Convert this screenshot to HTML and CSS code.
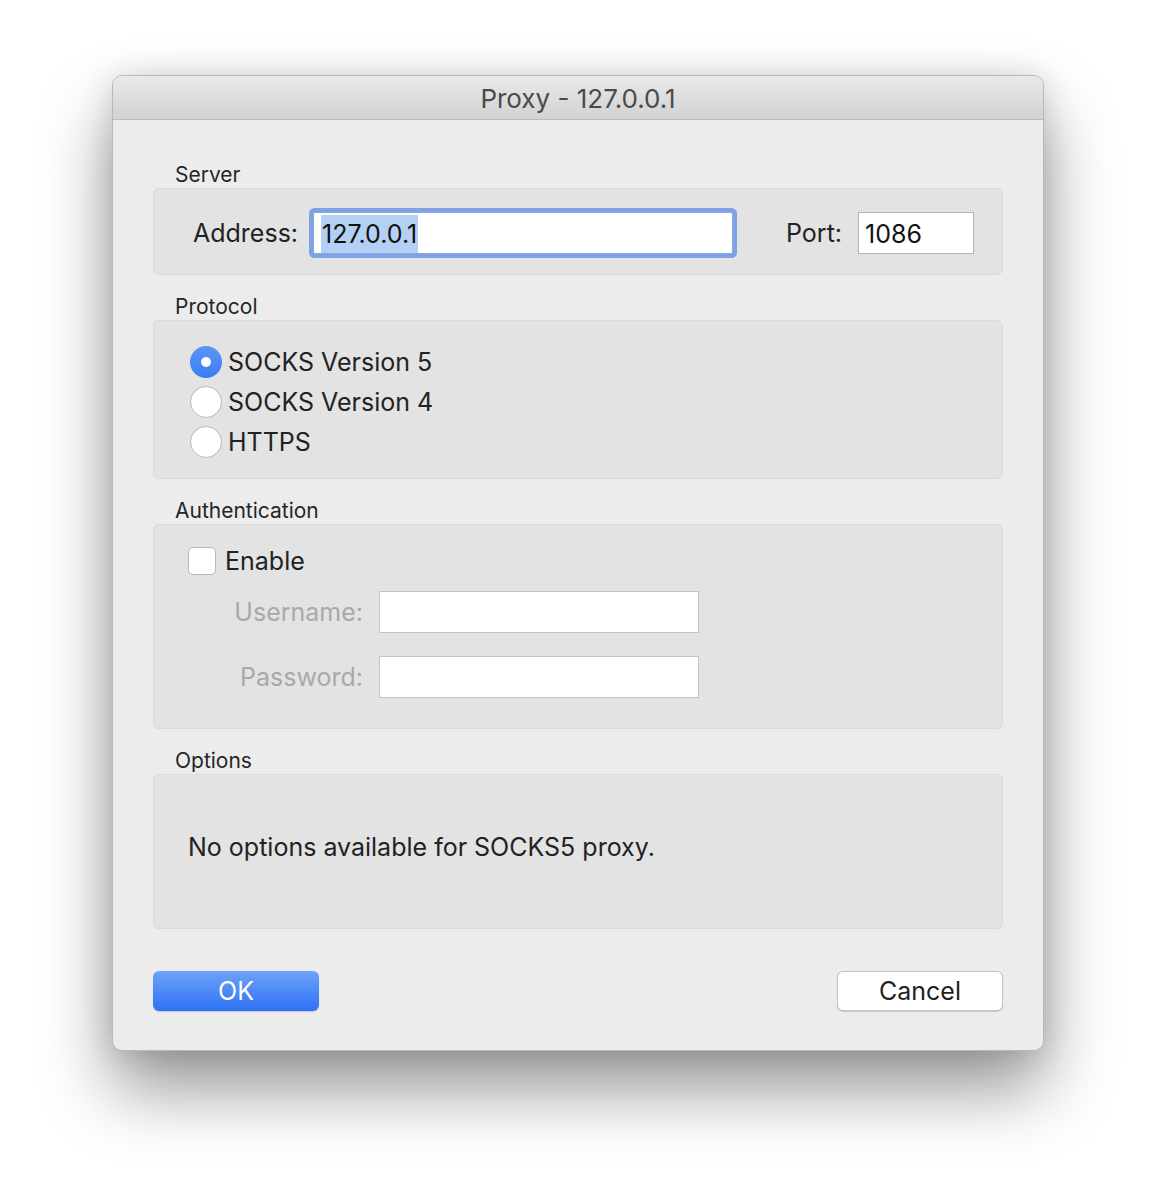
FILE: index.html
```html
<!DOCTYPE html>
<html lang="en">
<head>
    <meta charset="UTF-8">
    <title>Proxy - 127.0.0.1</title>
    <link rel="stylesheet" href="styles.css">
</head>
<body>
    <div class="window">
        <div class="titlebar">Proxy - 127.0.0.1</div>
        <div class="content">
            <div class="section-label">Server</div>
            <div class="group server">
                <label class="field-label">Address:</label>
                <div class="input address"><span class="selected">127.0.0.1</span></div>
                <label class="field-label port-label">Port:</label>
                <div class="input port">1086</div>
            </div>

            <div class="section-label">Protocol</div>
            <div class="group protocol">
                <div class="radio-row"><span class="radio checked"></span>SOCKS Version 5</div>
                <div class="radio-row"><span class="radio"></span>SOCKS Version 4</div>
                <div class="radio-row"><span class="radio"></span>HTTPS</div>
            </div>

            <div class="section-label">Authentication</div>
            <div class="group auth">
                <div class="check-row"><span class="checkbox"></span>Enable</div>
                <div class="auth-grid">
                    <label class="field-label disabled">Username:</label>
                    <div class="input auth-input"></div>
                    <label class="field-label disabled">Password:</label>
                    <div class="input auth-input"></div>
                </div>
            </div>

            <div class="section-label">Options</div>
            <div class="group options">
                No options available for SOCKS5 proxy.
            </div>

            <div class="buttons">
                <button class="btn primary">OK</button>
                <button class="btn">Cancel</button>
            </div>
        </div>
    </div>
</body>
</html>
```

FILE: styles.css
```css
html {
    height: 100%;
}

body {
    margin: 0;
    min-height: 100%;
    box-sizing: border-box;
    padding: 75px 0 0 112px;
    background-color: #ffffff;
    font-family: Inter, "Liberation Sans", sans-serif;
    color: #222222;
}

.window {
    width: 932px;
    box-sizing: border-box;
    background-color: #ececec;
    border: 1px solid #b9b9b9;
    border-radius: 10px;
    overflow: hidden;
    box-shadow: 0 38px 70px rgba(0, 0, 0, 0.42), 0 0 30px rgba(0, 0, 0, 0.12);
}

.titlebar {
    height: 43px;
    line-height: 46px;
    text-align: center;
    font-size: 26px;
    color: #4a4a4a;
    background: linear-gradient(#e9e9e9, #d2d2d2);
    border-bottom: 1px solid #bdbdbd;
}

.content {
    padding: 40px 40px 39px 40px;
}

.section-label {
    font-size: 21px;
    line-height: 28px;
    padding-top: 1px;
    height: 27px;
    padding-left: 22px;
    color: #262626;
}

.group {
    box-sizing: border-box;
    background-color: #e3e3e3;
    border: 1px solid #dadada;
    border-radius: 6px;
    margin-bottom: 17px;
    font-size: 25px;
}

.server {
    height: 87px;
    display: flex;
    align-items: center;
    padding: 3px 28px 0 39px;
}

.field-label {
    white-space: nowrap;
}

.input {
    background-color: #ffffff;
    border: 1px solid #b3b3b3;
    box-sizing: border-box;
    height: 42px;
    line-height: 42px;
    padding-left: 6px;
    color: #111111;
}

.address {
    width: 420px;
    margin-left: 15px;
    border-color: #8aa9e0;
    border-radius: 2px;
    box-shadow: 0 0 0 4px #7fa2e4;
    padding-left: 7px;
}

.selected {
    background-color: #b5d0f5;
    padding: 4px 1px;
}

.port-label {
    margin-left: 53px;
}

.port {
    width: 116px;
    margin-left: 16px;
}

.protocol {
    height: 159px;
    padding: 21px 0 0 36px;
}

.radio-row {
    display: flex;
    align-items: center;
    height: 40px;
}

.radio {
    width: 32px;
    height: 32px;
    box-sizing: border-box;
    border-radius: 50%;
    background-color: #ffffff;
    border: 1px solid #b8b8b8;
    margin-right: 6px;
    position: relative;
}

.radio.checked {
    border: none;
    background: linear-gradient(#5b95f7, #3a7df3);
}

.radio.checked::after {
    content: "";
    position: absolute;
    left: 11px;
    top: 11px;
    width: 10px;
    height: 10px;
    border-radius: 50%;
    background-color: #ffffff;
}

.auth {
    height: 205px;
    padding: 21px 0 0 34px;
}

.check-row {
    display: flex;
    align-items: center;
    height: 30px;
}

.checkbox {
    width: 28px;
    height: 28px;
    box-sizing: border-box;
    border-radius: 5px;
    background-color: #ffffff;
    border: 1px solid #b8b8b8;
    margin-right: 9px;
}

.auth-grid {
    display: grid;
    grid-template-columns: 175px 320px;
    column-gap: 16px;
    row-gap: 23px;
    align-items: center;
    margin-top: 15px;
}

.auth-grid .field-label {
    text-align: right;
}

.disabled {
    color: #a9a9a9;
}

.auth-input {
    height: 42px;
    border-color: #c4c4c4;
}

.options {
    height: 155px;
    display: flex;
    align-items: center;
    padding: 0 0 10px 34px;
}

.buttons {
    display: flex;
    justify-content: space-between;
    margin-top: 42px;
}

.btn {
    width: 166px;
    height: 40px;
    font-family: inherit;
    font-size: 25px;
    color: #222222;
    background-color: #ffffff;
    border: 1px solid #c3c3c3;
    border-radius: 6px;
    box-shadow: 0 1px 1px rgba(0, 0, 0, 0.15);
    padding: 0;
}

.btn.primary {
    color: #ffffff;
    border: none;
    background: linear-gradient(#6ea2f8, #2e72f5);
}
```
